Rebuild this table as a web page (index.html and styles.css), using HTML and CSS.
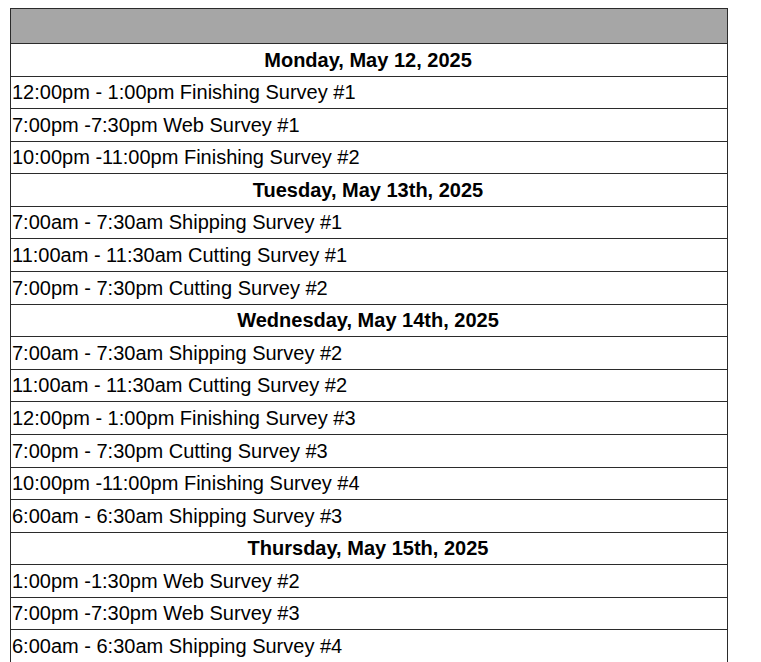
FILE: index.html
```html
<!DOCTYPE html>
<html>
<head>
<meta charset="utf-8">
<link rel="stylesheet" href="styles.css">
</head>
<body>
<table class="schedule">
  <tbody>
    <tr class="head-row"><td class="head"></td></tr>
    <tr><td class="day">Monday, May 12, 2025</td></tr>
    <tr><td class="item">12:00pm - 1:00pm Finishing Survey #1</td></tr>
    <tr><td class="item">7:00pm -7:30pm Web Survey #1</td></tr>
    <tr><td class="item">10:00pm -11:00pm Finishing Survey #2</td></tr>
    <tr><td class="day">Tuesday, May 13th, 2025</td></tr>
    <tr><td class="item">7:00am - 7:30am Shipping Survey #1</td></tr>
    <tr><td class="item">11:00am - 11:30am Cutting Survey #1</td></tr>
    <tr><td class="item">7:00pm - 7:30pm Cutting Survey #2</td></tr>
    <tr><td class="day">Wednesday, May 14th, 2025</td></tr>
    <tr><td class="item">7:00am - 7:30am Shipping Survey #2</td></tr>
    <tr><td class="item">11:00am - 11:30am Cutting Survey #2</td></tr>
    <tr><td class="item">12:00pm - 1:00pm Finishing Survey #3</td></tr>
    <tr><td class="item">7:00pm - 7:30pm Cutting Survey #3</td></tr>
    <tr><td class="item">10:00pm -11:00pm Finishing Survey #4</td></tr>
    <tr><td class="item">6:00am - 6:30am Shipping Survey #3</td></tr>
    <tr><td class="day">Thursday, May 15th, 2025</td></tr>
    <tr><td class="item">1:00pm -1:30pm Web Survey #2</td></tr>
    <tr><td class="item">7:00pm -7:30pm Web Survey #3</td></tr>
    <tr><td class="item">6:00am - 6:30am Shipping Survey #4</td></tr>
  </tbody>
</table>
</body>
</html>
```

FILE: styles.css
```css
html, body {
  background: #ffffff;
}
body {
  margin: 8px 8px 0 10px;
  font-family: "Liberation Sans", Arial, sans-serif;
  color: #000000;
}
.schedule {
  border-collapse: collapse;
  width: 718px;
  table-layout: fixed;
}
.schedule td {
  border: 1px solid #2b2b2b;
  padding: 0 3px 4px 1px;
  font-size: 20px;
  line-height: 23px;
  vertical-align: bottom;
  white-space: nowrap;
  overflow: hidden;
  height: 32.58px;
  box-sizing: border-box;
}
.schedule td.head {
  background: #a6a6a6;
  height: 35px;
}
.schedule td.day {
  font-weight: bold;
  text-align: center;
}
.schedule td.item {
  text-align: left;
}
```
